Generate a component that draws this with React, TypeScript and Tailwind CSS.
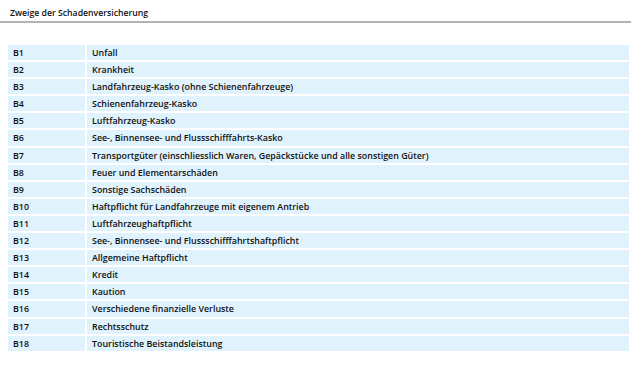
const rows: [string, string][] = [
  ['B1', 'Unfall'],
  ['B2', 'Krankheit'],
  ['B3', 'Landfahrzeug-Kasko (ohne Schienenfahrzeuge)'],
  ['B4', 'Schienenfahrzeug-Kasko'],
  ['B5', 'Luftfahrzeug-Kasko'],
  ['B6', 'See-, Binnensee- und Flussschifffahrts-Kasko'],
  ['B7', 'Transportgüter (einschliesslich Waren, Gepäckstücke und alle sonstigen Güter)'],
  ['B8', 'Feuer und Elementarschäden'],
  ['B9', 'Sonstige Sachschäden'],
  ['B10', 'Haftpflicht für Landfahrzeuge mit eigenem Antrieb'],
  ['B11', 'Luftfahrzeughaftpflicht'],
  ['B12', 'See-, Binnensee- und Flussschifffahrtshaftpflicht'],
  ['B13', 'Allgemeine Haftpflicht'],
  ['B14', 'Kredit'],
  ['B15', 'Kaution'],
  ['B16', 'Verschiedene finanzielle Verluste'],
  ['B17', 'Rechtsschutz'],
  ['B18', 'Touristische Beistandsleistung'],
];

export default function App() {
  return (
    <div className="w-[640px] h-[369px] bg-white text-[#111] font-['Open_Sans',sans-serif]">
      {/* Titel */}
      <div className="w-[631px] h-[23px] border-b-2 border-[#b3b3b3] pl-[10px] pt-[8px]">
        <span className="text-[8.7px] font-semibold leading-[11px] block">Zweige der Schadenversicherung</span>
      </div>

      {/* Tabelle */}
      <div className="ml-[8px] mt-[22px] w-[621px] flex flex-col gap-[2px]">
        {rows.map(([code, label]) => (
          <div key={code} className="flex gap-[2px] h-[15.1px] text-[8.9px] font-semibold leading-[15px]">
            <div className="w-[77px] bg-[#e0f2fc] pl-[5px]">{code}</div>
            <div className="flex-1 bg-[#e0f2fc] pl-[5px]">{label}</div>
          </div>
        ))}
      </div>
    </div>
  );
}
